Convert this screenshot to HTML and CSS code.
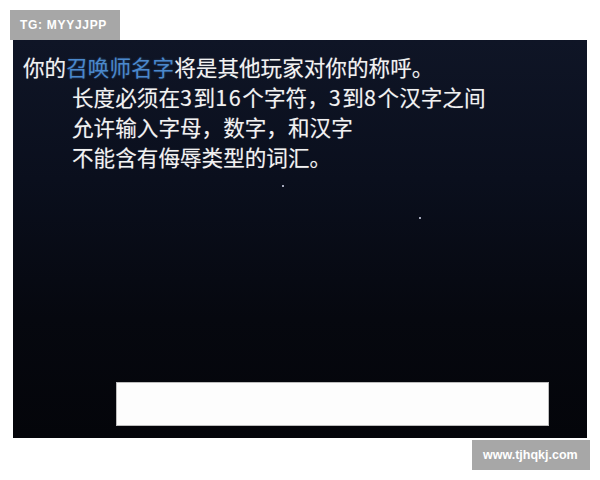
FILE: index.html
```html
<!DOCTYPE html>
<html lang="zh-CN">
<head>
<meta charset="utf-8">
<title>召唤师名字</title>
<link rel="stylesheet" href="styles.css">
</head>
<body>
  <div class="badge">TG: MYYJJPP</div>
  <div class="panel">
    <div class="msg">
      <p class="line">你的<span class="hl">召唤师名字</span>将是其他玩家对你的称呼。</p>
      <p class="line indent">长度必须在<span class="num">3</span>到<span class="num">16</span>个字符，<span class="num">3</span>到<span class="num">8</span>个汉字之间</p>
      <p class="line indent">允许输入字母，数字，和汉字</p>
      <p class="line indent">不能含有侮辱类型的词汇。</p>
    </div>
    <span class="star s1"></span>
    <span class="star s2"></span>
    <div class="input"></div>
  </div>
  <div class="footer">
    <div class="site">www.tjhqkj.com</div>
  </div>
</body>
</html>
```
FILE: styles.css
```css
html, body {
  margin: 0;
  padding: 0;
  background: #ffffff;
}
body {
  width: 600px;
  height: 480px;
  overflow: hidden;
  font-family: "Liberation Sans", Arial, sans-serif;
}
.badge {
  margin: 10px 0 0 10px;
  width: 110px;
  height: 30px;
  box-sizing: border-box;
  padding-left: 10px;
  background: #a7a7a7;
  color: #ffffff;
  font-size: 12px;
  font-weight: bold;
  letter-spacing: 0.7px;
  line-height: 30px;
  white-space: nowrap;
}
.panel {
  position: relative;
  margin-left: 13px;
  width: 574px;
  height: 398px;
  background: linear-gradient(180deg, #0f1526 0%, #0a0f1d 35%, #06080f 70%, #04050a 100%);
  display: flex;
  flex-direction: column;
}
.msg {
  padding-top: 12px;
  font-family: "Noto Sans CJK SC", "Noto Sans", sans-serif;
  font-size: 21.6px;
  line-height: 30px;
  color: #f2f2f2;
  text-shadow: 0 0 1px rgba(255,255,255,0.35);
}
.line {
  margin: 0;
  padding-left: 10px;
  white-space: nowrap;
}
.line.indent {
  padding-left: 59px;
}
.num {
  letter-spacing: 1.6px;
}
.hl {
  color: #4a88cc;
  text-shadow: 0 0 2px rgba(74,136,204,0.5);
}
.star {
  position: absolute;
  width: 2px;
  height: 2px;
  background: #d8dcf0;
  border-radius: 1px;
}
.s1 { left: 269px; top: 145px; }
.s2 { left: 406px; top: 177px; }
.input {
  margin: auto 0 12px 103px;
  width: 433px;
  height: 44px;
  box-sizing: border-box;
  background: #fdfdfd;
  border: 1px solid #bdbdbd;
}
.footer {
  display: flex;
  justify-content: flex-end;
  padding-right: 10px;
  margin-top: 2px;
}
.site {
  width: 118px;
  height: 30px;
  box-sizing: border-box;
  padding-left: 11px;
  background: #a7a7a7;
  color: #ffffff;
  font-size: 12.5px;
  font-weight: bold;
  line-height: 30px;
  white-space: nowrap;
}
```
